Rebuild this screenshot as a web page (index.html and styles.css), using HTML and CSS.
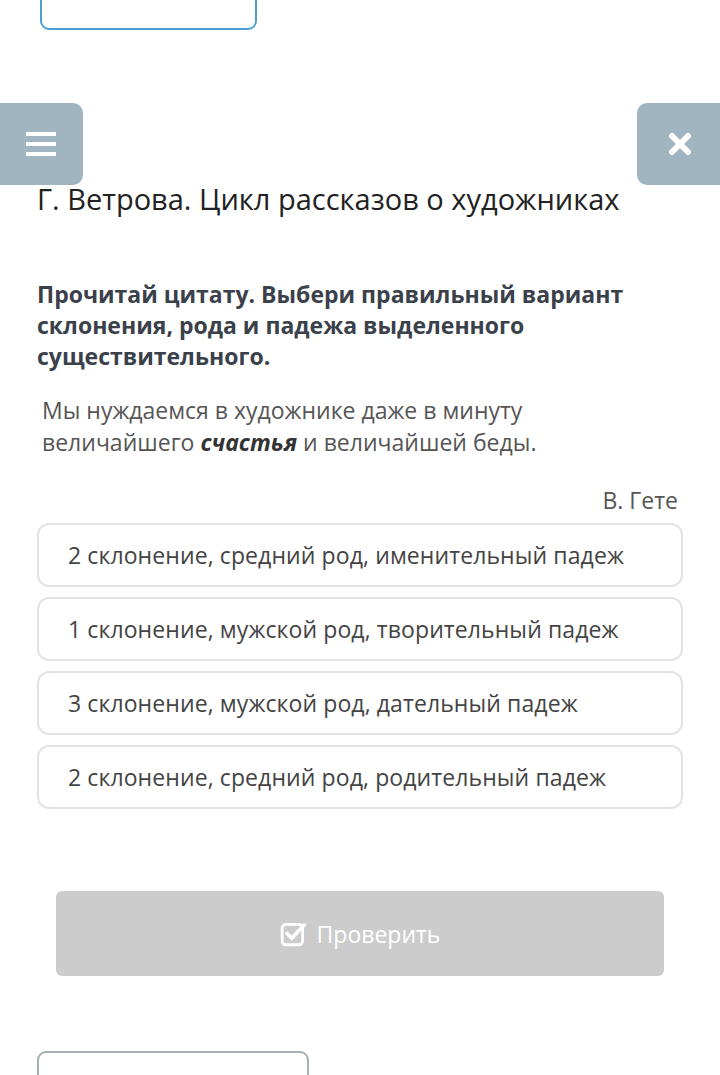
FILE: index.html
```html
<!DOCTYPE html>
<html lang="ru">
<head>
  <meta charset="UTF-8" />
  <meta name="viewport" content="width=device-width, initial-scale=1.0" />
  <title>Г. Ветрова. Цикл рассказов о художниках</title>
  <link rel="stylesheet" href="styles.css">
</head>
<body>
  <div class="back-btn"></div>

  <button class="side-btn menu-btn" aria-label="Меню">
    <svg width="30" height="24" viewBox="0 0 30 24"><rect x="0" y="0" width="30" height="4" fill="#fff"/><rect x="0" y="10" width="30" height="4" fill="#fff"/><rect x="0" y="20" width="30" height="4" fill="#fff"/></svg>
  </button>
  <button class="side-btn close-btn" aria-label="Закрыть">
    <svg width="24" height="24" viewBox="0 0 24 24"><path d="M4 4 L20 20 M20 4 L4 20" stroke="#fff" stroke-width="6" stroke-linecap="round"/></svg>
  </button>

  <main class="task">
    <h1 class="task-title">Г. Ветрова. Цикл рассказов о художниках</h1>
    <p class="question">Прочитай цитату. Выбери правильный вариант склонения, рода и падежа выделенного существительного.</p>
    <p class="quote">Мы нуждаемся в художнике даже в минуту величайшего <b class="accent">счастья</b> и величайшей беды.</p>
    <p class="author">В. Гете</p>

    <div class="options">
      <div class="option">2 склонение, средний род, именительный падеж</div>
      <div class="option">1 склонение, мужской род, творительный падеж</div>
      <div class="option">3 склонение, мужской род, дательный падеж</div>
      <div class="option">2 склонение, средний род, родительный падеж</div>
    </div>

    <button class="check-btn">
      <svg width="28" height="28" viewBox="0 0 26 26"><rect x="2" y="4" width="19" height="19" rx="3.5" fill="none" stroke="#fff" stroke-width="2.6"/><path d="M6.5 12.5 L11 17 L22.5 4.5" fill="none" stroke="#fff" stroke-width="3.4" stroke-linecap="round" stroke-linejoin="round"/></svg>
      Проверить
    </button>

    <div class="next-box"></div>
  </main>
</body>
</html>
```

FILE: styles.css
```css
body {
  margin: 0;
  font-family: "Open Sans", "Noto Sans", sans-serif;
  background: #fff;
  color: #333;
  overflow: hidden;
}
.back-btn {
  width: 213px;
  height: 60px;
  margin: -34px 0 0 40px;
  border: 2px solid #4b9fd3;
  border-radius: 9px;
}
.side-btn {
  position: absolute;
  top: 103px;
  width: 83px;
  height: 82px;
  border: none;
  background: #a0b4c1;
  display: flex;
  align-items: center;
  justify-content: center;
  padding: 0;
}
.menu-btn {
  left: 0;
  border-radius: 0 10px 10px 0;
  padding-right: 2px;
}
.close-btn {
  right: 0;
  border-radius: 10px 0 0 10px;
  padding-left: 2px;
}
.task {
  padding: 0 37px;
}
.task-title {
  margin: 150px 0 0;
  font-size: 29px;
  font-weight: 400;
  line-height: 38px;
  color: #222;
}
.question {
  margin: 61px 0 0;
  font-size: 23px;
  font-weight: 700;
  line-height: 31px;
  color: #3b414b;
}
.quote {
  max-width: 530px;
  margin: 22px 0 0;
  padding-left: 5px;
  font-size: 23px;
  line-height: 32px;
  color: #555;
}
.quote .accent {
  font-style: italic;
  color: #333;
}
.author {
  margin: 26px 5px 0 0;
  text-align: right;
  font-size: 23px;
  line-height: 32px;
  color: #555;
}
.options {
  margin-top: 7px;
  display: flex;
  flex-direction: column;
  gap: 10px;
}
.option {
  height: 60px;
  border: 2px solid #e3e3e3;
  border-radius: 12px;
  padding-left: 29px;
  display: flex;
  align-items: center;
  font-size: 23px;
  color: #444;
  letter-spacing: 0.1px;
}
.check-btn {
  display: flex;
  align-items: center;
  justify-content: center;
  gap: 9px;
  width: calc(100% - 38px);
  height: 85px;
  margin: 82px 19px 0;
  border: none;
  border-radius: 6px;
  background: #cccccc;
  color: #fff;
  font-family: inherit;
  font-size: 23px;
}
.next-box {
  width: 268px;
  height: 60px;
  margin-top: 75px;
  border: 2px solid #a5b1b3;
  border-radius: 9px;
}
```
